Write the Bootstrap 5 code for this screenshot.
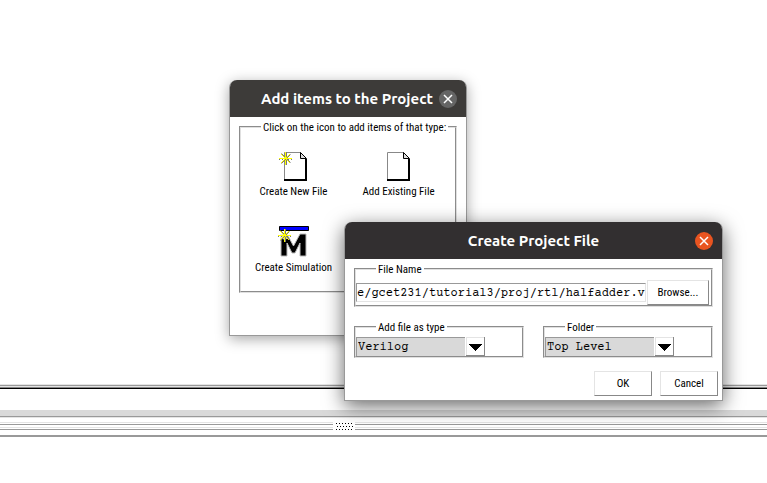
<!DOCTYPE html>
<html lang="en">
<head>
<meta charset="utf-8">
<meta name="viewport" content="width=device-width, initial-scale=1">
<title>Create Project File</title>
<link href="https://cdn.jsdelivr.net/npm/bootstrap@5.3.0/dist/css/bootstrap.min.css" rel="stylesheet">
<style>
body { font: 11px/16px "Roboto Condensed", "Liberation Sans", sans-serif; color: #000; background: #fff; }
.workspace { min-height: 100vh; padding-top: 384px; }
.pane-line { height: 5px; background: linear-gradient(#e4e4e4 1px, #999 1px 2px, #e4e4e4 2px 3px, #888 3px 4px, #000 4px); }
.pane-strip { height: 8px; margin-top: 21px; background: linear-gradient(#d9d9d9 6px, #999 6px 7px, #e4e4e4 7px); }
.sash { height: 8px; margin-top: 4px; background: linear-gradient(#e4e4e4 1px, #fff 1px 2px, #999 2px 3px, #fff 3px 5px, #e4e4e4 5px 6px, #fff 6px 7px, #999 7px); }
.sash svg { margin-left: -79px; }
.pane-end { height: 2px; margin-top: 5px; background: #999; }
.win { position: absolute; background: #fff; border: 1px solid #999; border-top: 0; border-radius: 8px 8px 0 0; }
.win-items { left: 229px; top: 80px; width: 238px; height: 256px; box-shadow: 0 3px 14px rgba(0,0,0,.35); }
.win-file { left: 344px; top: 222px; width: 379px; box-shadow: 0 5px 20px rgba(0,0,0,.6); }
.titlebar { height: 37px; padding: 0 9px; border-radius: 7px 7px 0 0; background: #3d3b39; color: #fff; gap: 6px; }
.win-file .titlebar { background: #322f30; padding-left: 33px; }
.titlebar h1 { font: bold 15px/20px Ubuntu, "Noto Sans", sans-serif; margin: 0; }
.close-btn { width: 18px; height: 18px; border: 0; border-radius: 50%; background: #656565; }
.win-file .close-btn { background: #e95420; }
.win-body { padding: 3px 9px 0; }
.win-file .win-body { padding-bottom: 4px; }
.groove { border: 2px groove #e0e0e0; margin: 0; }
.groove legend { float: none; width: auto; font-size: 11px; line-height: 12px; margin: 0 0 0 20px; padding: 2px 2px 0; }
.groove label { display: block; }
.item-grid { padding: 16px 4px 15px 0; row-gap: 26px; }
.item-btn { border: 0; background: none; padding: 0; width: 50%; height: 50px; color: #000; }
.item-btn svg { display: block; margin: 0 auto; height: 34px; }
.mono { font: 12px/16px "Courier Prime", "Liberation Mono", monospace; color: #000; border-radius: 0; }
.path-row { padding: 4px 2px 0 0; gap: 1px; }
.path-input { min-width: 0; border: 1px solid #999; border-right-color: #e4e4e4; border-bottom-color: #e4e4e4; height: 19px; padding: 2px 0 0; }
.tk-btn { border: 1px solid #e4e4e4; border-right-color: #888; border-bottom-color: #888; background: #fff; color: #000; border-radius: 0; padding: 0; width: 58px; height: 25px; }
.browse { width: 62px; }
.second-row { margin-top: 13px; gap: 19px; }
.combo { position: relative; height: 19px; width: 129px; margin-top: 3px; }
.combo select { display: block; appearance: none; width: 129px; height: 19px; border: 1px solid #999; border-width: 1px 0 0 1px; padding: 2px 20px 0 1px; background: #d9d9d9; }
.combo svg { position: absolute; right: 0; top: 0; pointer-events: none; }
.actions { margin: 13px -5px 0 0; }
</style>
</head>
<body>
<svg class="d-none"><defs>
<g id="page"><path fill="#fff" d="M0 0h17l6 6v23H0z"/><path fill="none" stroke="#888" d="M.5 29V.5H17"/><path fill="none" stroke="#000" stroke-width="2" d="M0 28h22V7"/><path fill="#ddd" stroke="#000" d="M16.500 .5v6H22.500z"/></g>
<g id="spark"><path stroke="#777" d="M2.500 1.500l9 9M11.500 2.500l-9 9M7.500 0v13"/><path stroke="#ff0" d="M6.500 0v13M0 6.500h13M2 2l9 9M11 2l-9 9"/><path stroke="#777" stroke-dasharray="1 2" d="M0 7.500h13"/></g>
</defs></svg>
<main class="workspace position-relative overflow-hidden d-flex flex-column">
<div class="pane-line"></div>
<div class="pane-strip"></div>
<div class="sash d-flex justify-content-center"><svg width="22" height="10" shape-rendering="crispEdges"><path fill="#fff" d="M0 0h22v10H0z"/><path stroke="#000" stroke-dasharray="1 2" d="M3 1.500h17M4 4.500h16M3 7.500h17"/></svg></div>
<div class="pane-end"></div>

<section class="win win-items" aria-labelledby="t1">
<header class="titlebar d-flex align-items-center justify-content-end"><h1 id="t1">Add items to the Project</h1>
<button type="button" class="close-btn d-flex p-0" aria-label="Close"><svg width="18" height="18"><path stroke="#fff" stroke-width="1.500" d="M5 5l8 8M13 5l-8 8"/></svg></button></header>
<div class="win-body">
<fieldset class="groove"><legend class="text-nowrap">Click on the icon to add items of that type:</legend>
<div class="item-grid d-flex flex-wrap">
<button type="button" class="item-btn"><svg width="37"><use href="#page" x="9" y="2"/><use href="#spark" x="4" y="2"/></svg>Create New File</button>
<button type="button" class="item-btn"><svg width="23"><use href="#page" y="2"/></svg>Add Existing File</button>
<button type="button" class="item-btn"><svg width="31"><path fill="#00f" stroke="#000" d="M1.500 .5h29v4h-29z"/><path stroke="#bbb" stroke-width="1" d="M3 30V8h6l6.500 12L22 8h6v22h-6V17l-5 10h-3L9 17v13z"/><circle cx="6.500" cy="9.500" r="4" fill="#fff" fill-opacity=".8"/><use href="#spark" x="0" y="3"/></svg>Create Simulation</button>
</div>
</fieldset>
</div>
</section>

<section class="win win-file" aria-labelledby="t2">
<header class="titlebar d-flex align-items-center justify-content-end"><h1 id="t2" class="flex-grow-1 text-center">Create Project File</h1>
<button type="button" class="close-btn d-flex p-0" aria-label="Close"><svg width="18" height="18"><path stroke="#fff" stroke-width="1.500" d="M5 5l8 8M13 5l-8 8"/></svg></button></header>
<form class="win-body">
<fieldset class="groove"><legend><label for="path">File Name</label></legend>
<div class="path-row d-flex align-items-center">
<input id="path" type="text" class="mono path-input flex-grow-1" value="e/gcet231/tutorial3/proj/rtl/halfadder.v">
<button type="button" class="tk-btn browse">Browse...</button>
</div>
</fieldset>
<div class="second-row d-flex">
<fieldset class="groove flex-fill"><legend><label for="kind">Add file as type</label></legend>
<div class="combo"><select id="kind" class="mono"><option>Verilog</option></select><svg width="20" height="19" shape-rendering="crispEdges"><path fill="#fff" d="M0 0h20v19H0z"/><path fill="none" stroke="#e4e4e4" d="M1.500 19V.5H19"/><path fill="none" stroke="#888" d="M1 18.500h18.500V0"/><path d="M4 7h13l-6.500 7z"/></svg></div>
</fieldset>
<fieldset class="groove flex-fill"><legend><label for="folder">Folder</label></legend>
<div class="combo"><select id="folder" class="mono"><option>Top Level</option></select><svg width="20" height="19" shape-rendering="crispEdges"><path fill="#fff" d="M0 0h20v19H0z"/><path fill="none" stroke="#e4e4e4" d="M1.500 19V.5H19"/><path fill="none" stroke="#888" d="M1 18.500h18.500V0"/><path d="M4 7h13l-6.500 7z"/></svg></div>
</fieldset>
</div>
<div class="actions d-flex justify-content-end gap-2"><button type="submit" class="tk-btn">OK</button><button type="button" class="tk-btn">Cancel</button></div>
</form>
</section>
</main>
<script src="https://cdn.jsdelivr.net/npm/bootstrap@5.3.0/dist/js/bootstrap.bundle.min.js"></script>
</body>
</html>
